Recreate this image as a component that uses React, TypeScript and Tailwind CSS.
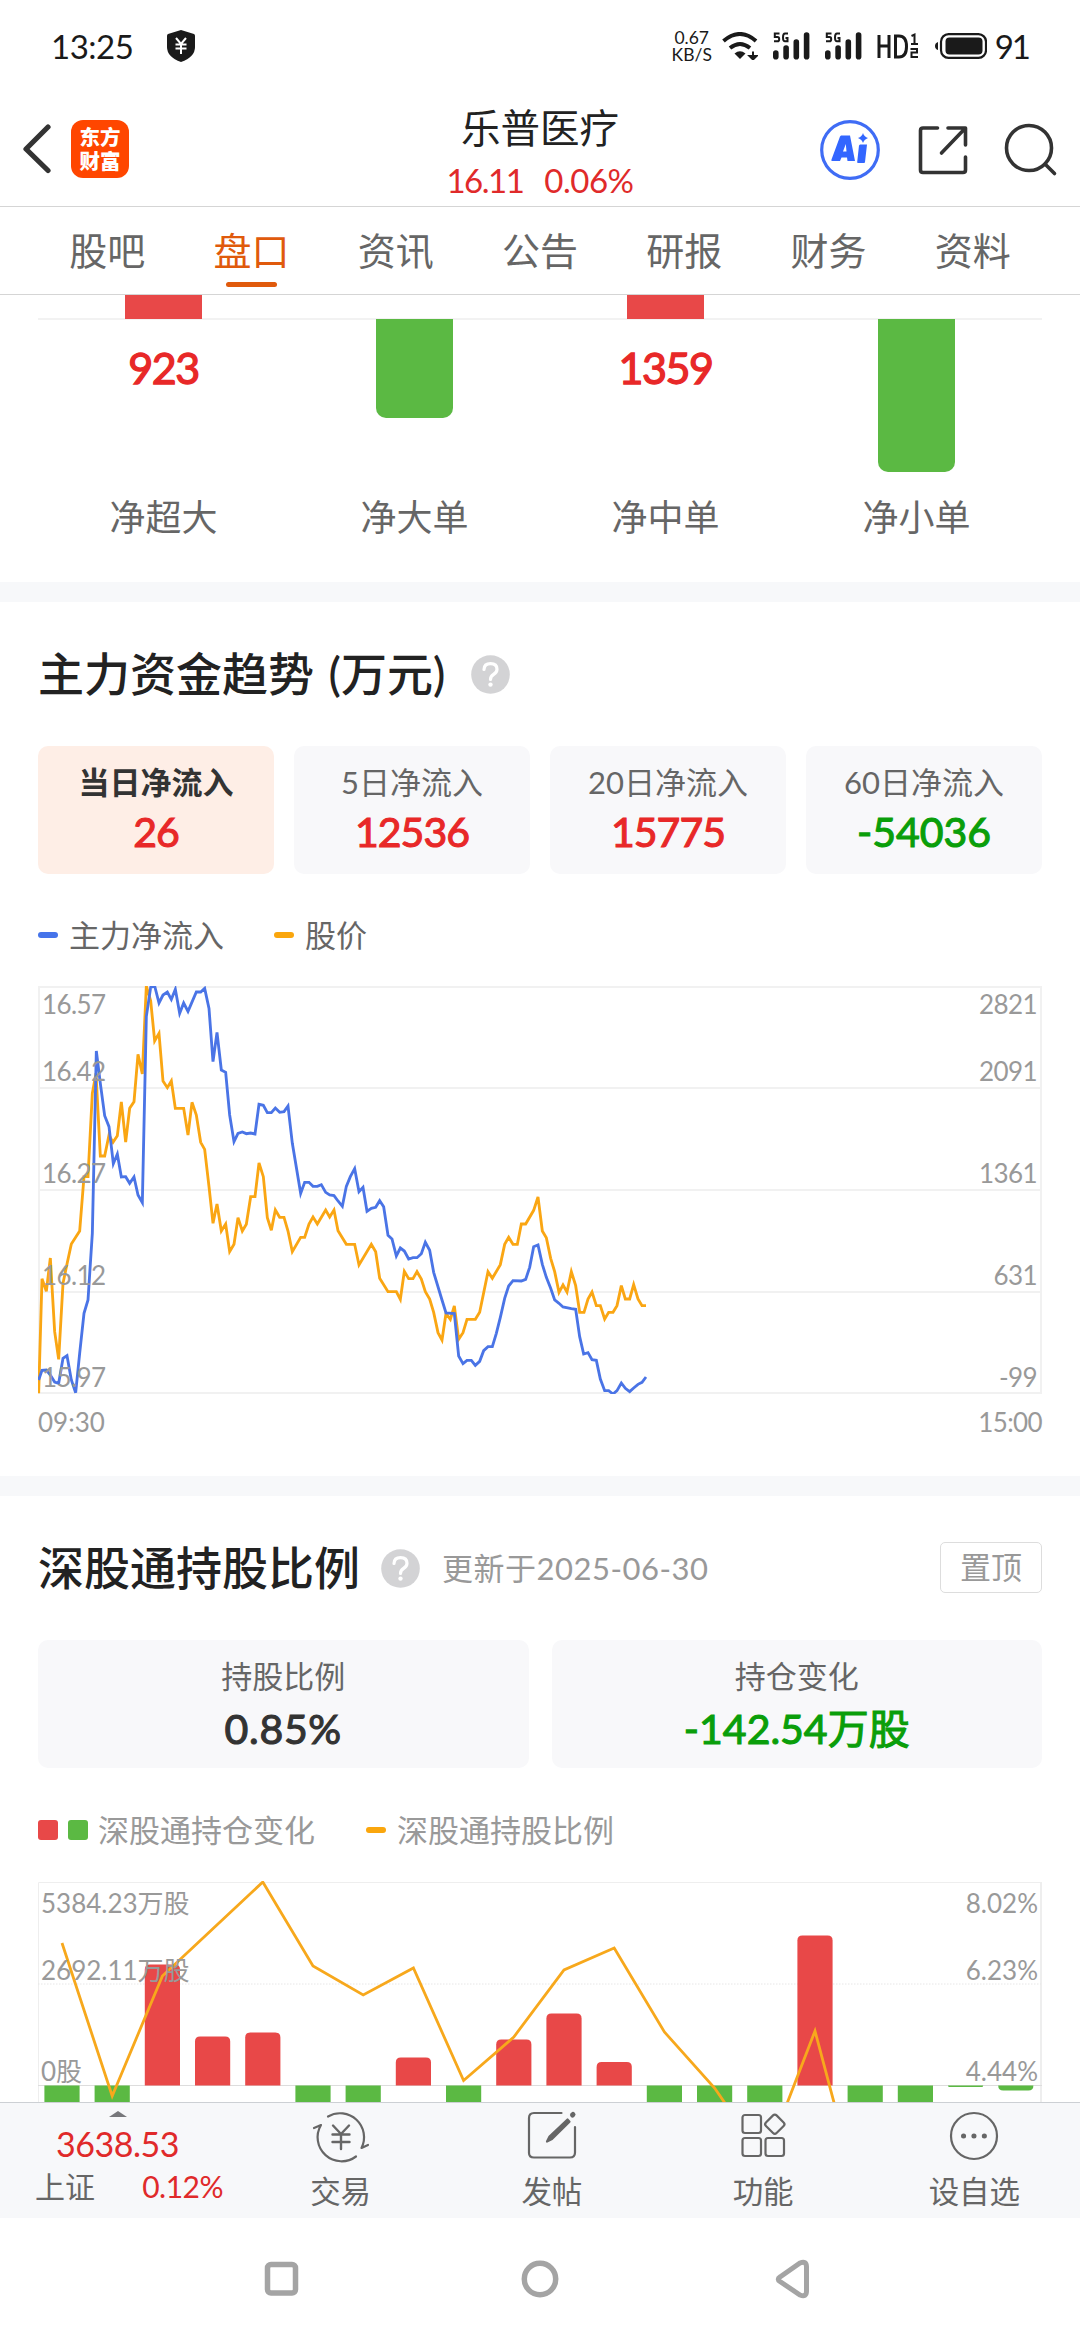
import type { ReactNode } from "react"
import clsx from "clsx"

const tabs = ["股吧", "盘口", "资讯", "公告", "研报", "财务", "资料"]

const netOrders = [
  { label: "净超大", value: "923" },
  { label: "净大单", height: 99 },
  { label: "净中单", value: "1359" },
  { label: "净小单", height: 153 },
]

const inflows = [
  { label: "当日净流入", value: "26", active: true },
  { label: "5日净流入", value: "12536" },
  { label: "20日净流入", value: "15775" },
  { label: "60日净流入", value: "-54036" },
]

const priceLine =
  "116,1270 126,926 139,964 151,864 164,1085 176,1168 189,940 201,882 214,822 227,802 239,783 252,620 264,620 277,370 288,310 301,558 314,558 327,495 339,517 352,497 364,396 377,516 389,415 402,395 414,253 427,312 439,48 452,92 464,213 477,190 489,333 502,353 514,333 526,415 551,415 564,495 576,397 589,435 602,517 614,538 627,650 639,760 651,702 664,783 677,762 689,845 702,823 714,743 727,783 739,763 752,680 765,680 777,579 790,620 802,743 814,781 826,720 839,742 852,742 864,783 877,845 902,802 914,802 927,762 939,741 952,762 977,720 989,741 1002,720 1014,782 1039,823 1064,823 1077,885 1114,823 1127,845 1139,925 1164,965 1189,965 1201,988 1213,904 1226,926 1239,926 1251,905 1264,927 1276,965 1289,987 1301,1027 1314,1088 1326,1110 1338,1030 1351,1048 1363,1008 1376,1108 1389,1088 1401,1048 1426,1048 1439,1027 1464,905 1477,925 1501,884 1514,823 1526,802 1539,823 1552,823 1564,762 1577,762 1601,721 1614,681 1627,783 1639,803 1652,865 1664,905 1677,967 1689,945 1701,966 1714,905 1727,947 1739,1027 1752,1027 1764,987 1776,966 1789,1007 1801,1007 1814,1047 1826,1027 1839,1027 1851,1007 1864,947 1876,987 1889,987 1901,944 1914,987 1926,1007 1938,1007"

const inflowLine =
  "116,1230 126,1201 139,1200 151,1215 164,1236 176,1240 189,1165 201,1157 214,1230 227,1268 239,1150 252,1030 264,990 277,790 289,243 301,340 314,437 327,470 340,581 352,552 364,621 377,620 389,640 402,621 414,675 427,698 439,140 452,52 464,48 477,99 489,75 502,66 514,88 526,58 539,130 551,99 564,124 589,66 602,66 614,55 627,115 639,275 651,187 664,300 677,307 689,435 702,515 714,490 727,486 739,491 752,489 765,492 777,403 790,406 802,428 814,428 826,414 839,427 852,425 864,408 877,520 902,670 914,637 927,637 939,649 952,649 964,644 977,667 989,675 1002,677 1014,693 1027,709 1039,649 1051,620 1064,596 1077,665 1089,652 1101,724 1114,715 1127,712 1139,692 1151,710 1164,796 1176,807 1189,858 1201,834 1213,843 1226,867 1239,863 1251,863 1264,851 1276,817 1289,841 1301,907 1326,990 1338,1029 1363,1031 1376,1158 1389,1181 1401,1171 1414,1171 1426,1186 1439,1174 1451,1142 1464,1130 1477,1130 1489,1090 1501,1042 1514,985 1526,948 1539,932 1564,933 1577,928 1589,892 1601,830 1614,825 1627,883 1639,922 1652,955 1664,990 1676,999 1689,1011 1714,1016 1727,1018 1739,1100 1751,1152 1764,1148 1776,1169 1789,1171 1801,1227 1814,1262 1826,1262 1839,1272 1851,1262 1864,1239 1876,1255 1889,1265 1901,1254 1914,1243 1926,1237 1938,1221"

const trendLabels = [
  { y: 18, left: "16.57", right: "2821" },
  { y: 85, left: "16.42", right: "2091" },
  { y: 187.5, left: "16.27", right: "1361" },
  { y: 289.5, left: "16.12", right: "631" },
  { y: 391.5, left: "15.97", right: "-99" },
]

// bar heights: positive grows up from the zero line, negative hangs below it
const holdingBars = [-60, -60, 121, 49, 53, -60, -60, 28, -60, 46, 72, 23.5, -60, -60, -60, 150, -60, -60, -1.5, -5]
const ratioLine = [62, 215, 95, 48, 1, 85, 114, 87, 199.5, 156, 89, 67, 151, 207, 280, 150, 339]

const holdingLabels = [
  { y: 22, left: "5384.23万股", right: "8.02%" },
  { y: 89, left: "2692.11万股", right: "6.23%" },
  { y: 190.5, left: "0股", right: "4.44%" },
]

function StatusBar() {
  return (
    <div className="flex h-[92px] shrink-0 items-center justify-between pl-[51px] pr-[51px] text-[#1a1a1a]">
      <div className="flex items-center gap-[34px]">
        <span className="text-[33px] leading-none tracking-[-0.500px]">13:25</span>
        <svg className="h-8 w-7" viewBox="0 0 28 32">
          <path d="M14 0 L27 4 Q28 4.500 28 6 V17 Q28 27 14 32 Q0 27 0 17 V6 Q0 4.500 1 4 Z" fill="#1a1a1a" />
          <path d="M9 8 L14 14 L19 8 M8.500 14.500 H19.500 M8.500 18.500 H19.500 M14 14 V24" stroke="#fff" strokeWidth="2" fill="none" />
        </svg>
      </div>
      <div className="flex items-center">
        <div className="flex w-[42px] flex-col items-center text-[17.500px] leading-[17px]">
          <span>0.67</span>
          <span>KB/S</span>
        </div>
        <svg className="ml-[9px] h-[28px] w-9" viewBox="0 0 36 28">
          <path d="M1.500 9 Q18 -5 34 9" stroke="#1a1a1a" strokeWidth="4" fill="none" />
          <path d="M8 16 Q18 8 28 16" stroke="#1a1a1a" strokeWidth="4" fill="none" />
          <path d="M12.500 21.500 Q18 17 23.500 21.500 L18 27 Z" fill="#1a1a1a" />
          <path d="M31 19.500 V26 M27.500 24 L31 27.500 L34.500 24 Z" stroke="#1a1a1a" strokeWidth="2" fill="#1a1a1a" />
        </svg>
        <Signal className="ml-[15px]" />
        <Signal className="ml-[15px]" />
        <svg className="ml-[15px] h-7 w-[42px]" viewBox="0 0 42 28">
          <path d="M2 3 V26 M12 3 V26 M2 14 H12 M18.500 4 V25 H22 Q29.500 25 29.500 14.500 Q29.500 4 22 4 Z" stroke="#1a1a1a" strokeWidth="3" fill="none" />
          <path d="M34.500 4 L37.500 2.500 V12.500 M34 12 H41 M33.500 17 H40 V20.500 H34.500 V25 H41" stroke="#1a1a1a" strokeWidth="2" fill="none" />
        </svg>
        <svg className="ml-[16px] h-[26px] w-[52px]" viewBox="0 0 52 26">
          <path d="M3 9 Q0 10 0 13 Q0 16 3 17 Z" fill="#1a1a1a" />
          <rect x="6" y="1.200" width="45" height="23.600" rx="7.500" stroke="#1a1a1a" strokeWidth="2.200" fill="none" />
          <rect x="10.500" y="4.500" width="37" height="17" rx="4" fill="#1a1a1a" />
        </svg>
        <span className="ml-2 text-[33px] leading-none tracking-[-2px]">91</span>
      </div>
    </div>
  )
}

function Signal({ className }: { className?: string }) {
  return (
    <svg className={clsx("h-[28px] w-[37px]", className)} viewBox="0 0 37 28">
      <path d="M6.500 1.500 H1.800 V5 H4.500 Q6.200 5 6.200 7.200 Q6.200 9.300 4.500 9.300 H1 M15 1.500 H12 Q10 1.500 10 5.500 Q10 9.300 12 9.300 H14.500 V6 H12.500" stroke="#1a1a1a" strokeWidth="2" fill="none" />
      <path d="M2.800 21 V24.700 M13.100 16 V24.700 M23.300 10 V24.700 M33.600 3 V24.700" stroke="#1a1a1a" strokeWidth="5.600" strokeLinecap="round" />
    </svg>
  )
}

function Header() {
  return (
    <header className="flex h-[115px] shrink-0 items-start border-b border-[#d5d5d5]">
      <div className="flex w-[360px] items-center pl-[22px] pt-7">
        <svg className="h-[50px] w-[30px]" viewBox="0 0 30 50">
          <path d="M26 4.500 L4 26.500 L26 48" transform="translate(0 -1.500)" stroke="#333" strokeWidth="5.200" strokeLinecap="round" strokeLinejoin="round" fill="none" />
        </svg>
        <div className="ml-[19px] flex h-[58px] w-[58px] flex-col items-center justify-center rounded-xl bg-[#ff4600] text-[20.500px] leading-[24.500px] font-black text-white">
          <span>东方</span>
          <span>财富</span>
        </div>
      </div>
      <div className="flex w-[360px] flex-col items-center pt-[11px]">
        <h1 className="text-[39.500px] leading-[50px] text-[#222]">乐普医疗</h1>
        <div className="mt-[11px] flex gap-[21px] text-[33px] leading-[32px] text-[#e02a2a]">
          <span className="tracking-[-1.500px]">16.11</span>
          <span className="tracking-[-0.500px]">0.06%</span>
        </div>
      </div>
      <div className="flex w-[360px] items-center justify-end pr-[22px] pt-7">
        <svg className="h-[60px] w-[60px]" viewBox="0 0 60 60">
          <circle cx="30" cy="30" r="28.300" stroke="#3f6cf5" strokeWidth="3.200" fill="none" />
          <path fillRule="evenodd" d="M21 15.500 H30 L35 41 H27.500 L27 37.500 H21.500 L20 41 H12 Q11 41 11.500 39.500 L20 16.500 Z M23 31.500 H26.500 L25.800 24 Z" fill="#3366ff" />
          <path d="M40 24.500 H47 L45 42 Q45 43 44 43 H38 Q37 43 37.200 42 L39 25.500 Z M43 13 Q44 16.500 48 18 Q44 19.500 43 23 Q42 19.500 38 18 Q42 16.500 43 13 Z" fill="#3366ff" />
        </svg>
        <svg className="ml-[37px] h-[52px] w-[52px]" viewBox="0 0 52 52">
          <path d="M20.500 4 H6 Q3.500 4 3.500 6.500 V46 Q3.500 48.500 6 48.500 H46 Q48.500 48.500 48.500 46 V33 M31 4 H48.500 V21 M47.500 5 L24.500 29" stroke="#333" strokeWidth="3.600" strokeLinecap="round" strokeLinejoin="round" fill="none" />
        </svg>
        <svg className="ml-[35px] h-[56px] w-[54px]" viewBox="0 0 54 56">
          <circle cx="25" cy="26" r="22.500" stroke="#333" strokeWidth="3.600" fill="none" />
          <path d="M41 42 L50.500 51.500" stroke="#333" strokeWidth="3.600" strokeLinecap="round" />
        </svg>
      </div>
    </header>
  )
}

function Tabs() {
  return (
    <nav className="flex h-[88px] shrink-0 border-b border-[#d5d5d5] px-[35px]">
      {tabs.map((tab) => (
        <div key={tab} className={clsx("flex flex-1 flex-col items-center pt-[17px] text-[38px] leading-[52px]", tab === "盘口" ? "text-[#e05a0c]" : "text-[#666]")}>
          {tab}
          {tab === "盘口" && <span className="mt-[6px] h-[5px] w-[51px] rounded-full bg-[#e05a0c]" />}
        </div>
      ))}
    </nav>
  )
}

function NetOrders() {
  return (
    <section className="grid h-[287px] shrink-0 grid-cols-4 px-[38px]">
      {netOrders.map((item) => (
        <div key={item.label} className="flex flex-col items-center">
          <div className="flex h-[25px] w-full justify-center border-b-2 border-[#f2f2f2]">
            {item.value && <div className="h-6 w-[77px] shrink-0 bg-[#e84848]" />}
          </div>
          <div className="flex h-[173px] flex-col items-center">
            {item.value ? (
              <span className="pt-[24px] text-[43px] leading-[48px] tracking-[-1.500px] text-[#e82828] [-webkit-text-stroke:1.3px_#e82828]">{item.value}</span>
            ) : (
              <div className="-mt-px w-[77px] rounded-b-[10px] bg-[#5bb943]" style={{ height: item.height }} />
            )}
          </div>
          <span className="text-[36px] leading-[48px] text-[#666]">{item.label}</span>
        </div>
      ))}
    </section>
  )
}

function Help() {
  return (
    <svg className="h-[39px] w-[39px] shrink-0" viewBox="0 0 39 39">
      <circle cx="19.500" cy="19.500" r="19.300" fill="#d3d3d5" />
      <path d="M13 14.500 Q13.200 8.700 19.500 8.700 Q26 8.700 26 14.300 Q26 17.500 22.500 19.500 Q19.500 21.300 19.500 24.500" stroke="#fff" strokeWidth="3.200" strokeLinecap="round" fill="none" />
      <circle cx="19.500" cy="29.600" r="2.200" fill="#fff" />
    </svg>
  )
}

function Stat({ label, value, active, className }: { label: string; value: string; active?: boolean; className: string }) {
  return (
    <div className={clsx("flex h-32 flex-1 flex-col items-center rounded-[10px] pt-[14px]", active ? "bg-[#feeee6]" : "bg-[#f8f8fa]")}>
      <span className={clsx("text-[31px] leading-[44px]", active ? "font-bold text-[#333]" : "text-[#666]")}>{label}</span>
      <span className={clsx("text-[41px] leading-[48px] [-webkit-text-stroke:1.1px_currentColor]", className)}>{value}</span>
    </div>
  )
}

function Dash({ className }: { className: string }) {
  return <span className={clsx("mr-[11px] h-[6px] w-5 rounded-[3px]", className)} />
}

function TrendSection() {
  return (
    <section className="h-[874px] shrink-0 px-[38px]">
      <div className="flex h-36 items-center">
        <h2 className="text-[46px] leading-none font-medium text-[#222] [word-spacing:3px]">主力资金趋势 (万元)</h2>
        <span className="ml-[26px]"><Help /></span>
      </div>
      <div className="flex gap-5">
        {inflows.map((item) => (
          <Stat
            key={item.label}
            {...item}
            className={item.value.startsWith("-") ? "mt-[4px] text-[#0a9e0a]" : "mt-[4px] tracking-[-1px] text-[#e82828]"}
          />
        ))}
      </div>
      <div className="mt-[36px] flex h-[50px] items-center text-[31px] text-[#666]">
        <Dash className="bg-[#4674ea]" />
        主力净流入
        <span className="w-[50px]" />
        <Dash className="bg-[#faa60d]" />
        股价
      </div>
      <div className="relative mt-[26px] h-[408px]">
        <svg className="absolute inset-0 h-[408px] w-[1004px]" viewBox="114 48 3012 1224">
          <path d="M117 51 H3123 V1269 H117 Z M117 354 H3123 M117 660 H3123 M117 966 H3123" stroke="#f1f1f1" strokeWidth="6" fill="none" />
          <polyline points={priceLine} stroke="#faa613" strokeWidth="8.500" fill="none" />
          <polyline points={inflowLine} stroke="#4a74e6" strokeWidth="8.500" fill="none" />
        </svg>
        <svg className="absolute inset-0 h-[408px] w-[1004px]" viewBox="0 0 1004 408" fontSize="26" letterSpacing="-0.6" fill="#999">
          {trendLabels.map((row) => (
            <g key={row.y}>
              <text x="4" y={row.y + 9.5}>{row.left}</text>
              <text x="999" y={row.y + 9.5} textAnchor="end">{row.right}</text>
            </g>
          ))}
        </svg>
      </div>
      <div className="mt-[10px] flex justify-between text-[26px] leading-[36px] text-[#999]">
        <span>09:30</span>
        <span className="tracking-[-0.600px]">15:00</span>
      </div>
    </section>
  )
}

function HoldingSection() {
  return (
    <section className="h-[606px] shrink-0 overflow-hidden px-[38px]">
      <div className="flex h-36 items-center">
        <h2 className="text-[46px] leading-none font-medium text-[#222]">深股通持股比例</h2>
        <span className="ml-[21px]"><Help /></span>
        <span className="ml-[22px] text-[31px] tracking-[0.500px] text-[#999]">更新于2025-06-30</span>
        <button className="mb-[2px] ml-auto h-[51px] w-[102px] rounded-[5px] border border-[#ddd] text-[31px] leading-[47px] text-[#999]">置顶</button>
      </div>
      <div className="flex gap-[23px]">
        <Stat label="持股比例" value="0.85%" className="mt-[7px] tracking-[0.700px] text-[#333]" />
        <Stat label="持仓变化" value="-142.54万股" className="mt-[7px] text-[#0a9e0a]" />
      </div>
      <div className="mt-[37px] flex h-[50px] items-center text-[31px] text-[#999]">
        <span className="h-5 w-5 rounded-[3px] bg-[#e84848]" />
        <span className="mx-[10px] h-5 w-5 rounded-[3px] bg-[#5bb943]" />
        深股通持仓变化
        <span className="w-[51px]" />
        <Dash className="bg-[#faa60d]" />
        深股通持股比例
      </div>
      <svg className="mt-[26px] h-[221px] w-[1004px]" viewBox="0 0 1004 221">
        <path d="M0.500 300 V1.500 H1003" stroke="#eee" fill="none" />
        <path d="M1003 1 V300" stroke="#eee" strokeWidth="2" />
        <path d="M0 103 H1003" stroke="#e6e6e6" strokeDasharray="1.500 1.500" />
        <path d="M0 204.500 H1004" stroke="#ddd" />
        {holdingBars.map((h, i) => {
          const x = 6.4 + i * 50.2
          const r = Math.min(5, Math.abs(h))
          return h > 0 ? (
            <path key={i} d={`M${x} 204.5 v${-(h - r)} q0 ${-r} ${r} ${-r} h${35.2 - 2 * r} q${r} 0 ${r} ${r} v${h - r} z`} fill="#e84848" />
          ) : (
            <path key={i} d={`M${x} 204.5 v${-h - r} q0 ${r} ${r} ${r} h${35.2 - 2 * r} q${r} 0 ${r} ${-r} v${h + r} z`} fill="#5bb943" />
          )
        })}
        <polyline points={ratioLine.map((y, i) => `${24 + i * 50.2},${y}`).join(" ")} stroke="#f7a81c" strokeWidth="2.800" fill="none" />
        <g fontSize="26" fill="#999">
          {holdingLabels.map((row) => (
            <g key={row.y}>
              <text x="3" y={row.y + 9.5}>{row.left}</text>
              <text x="1000" y={row.y + 9.5} textAnchor="end">{row.right}</text>
            </g>
          ))}
        </g>
      </svg>
    </section>
  )
}

function Action({ label, children }: { label: string; children: ReactNode }) {
  return (
    <div className="flex flex-1 flex-col items-center pt-[5px]">
      <svg className="h-[56px] w-[60px]" viewBox="0 0 60 56" stroke="#666" strokeWidth="2.200" strokeLinecap="round" strokeLinejoin="round" fill="none">
        {children}
      </svg>
      <span className="mt-[5px] text-[30.500px] leading-[44px] text-[#666]">{label}</span>
    </div>
  )
}

function BottomBar() {
  return (
    <footer className="flex h-[116px] shrink-0 border-t border-[#ccd0d4] bg-[#f7f8fa]">
      <div className="flex w-[235px] flex-col items-center pt-2">
        <svg className="h-[6px] w-[18px]" viewBox="0 0 18 6"><path d="M0 6 L9 0 L18 6 Z" fill="#77777b" /></svg>
        <span className="mt-[9px] text-[34px] leading-[36px] tracking-[-0.500px] text-[#e02a2a]">3638.53</span>
        <div className="mt-[4px] flex w-full justify-between pl-[35px] pr-[12px] text-[30px] leading-[40px]">
          <span className="text-[#666]">上证</span>
          <span className="tracking-[-0.500px] text-[#e02a2a]">0.12%</span>
        </div>
      </div>
      <Action label="交易">
        <path d="M17 8.500 A24 24 0 0 1 50.500 40 L57 37 M45 48.500 A24 24 0 0 1 10 17 L3 20" />
        <path d="M22 17.500 L30 26 L38 17.500 M21.500 26.500 H38.500 M21.500 34 H38.500 M30 26.500 V41" strokeWidth="2.400" />
      </Action>
      <Action label="发帖">
        <path d="M39.500 5 H12 Q7 5 7 10 V45 Q7 49.500 12 49.500 H48 Q53 49.500 53 44.500 V19" />
        <path d="M45.500 11.500 L47.500 13.800 L30 31 L25 33.500 L27.500 28.500 Z" fill="#666" />
        <path d="M51 6.500 L50.500 7" strokeWidth="5" />
      </Action>
      <Action label="功能">
        <rect x="9.500" y="7" width="18.500" height="18" rx="2.500" />
        <rect x="9.500" y="30" width="18.500" height="18" rx="2.500" />
        <rect x="32.500" y="30" width="18.500" height="18" rx="2.500" />
        <rect x="34.300" y="8.700" width="15" height="15" rx="2.500" transform="rotate(45 41.800 16.200)" />
      </Action>
      <Action label="设自选">
        <circle cx="30" cy="28" r="23" />
        <path d="M19.500 28 h0.100 M29.900 28 h0.100 M40.300 28 h0.100" strokeWidth="5" />
      </Action>
    </footer>
  )
}

function SystemNav() {
  return (
    <div className="flex h-[122px] items-center pl-[262px]">
      <svg className="h-10 w-10" viewBox="0 0 40 40"><rect x="5.500" y="5.500" width="28" height="28.500" rx="3.500" stroke="#a4a4a4" strokeWidth="5.500" fill="none" /></svg>
      <svg className="ml-[218px] h-10 w-10" viewBox="0 0 40 40"><circle cx="20" cy="20" r="15.700" stroke="#a4a4a4" strokeWidth="5.500" fill="none" /></svg>
      <svg className="ml-[212px] h-10 w-10" viewBox="0 0 40 40"><path d="M8 18 L28 4 Q34.500 1.500 34.500 8 V32 Q34.500 38.500 28 36 L8 22.500 Q4.500 20 8 18 Z" stroke="#a4a4a4" strokeWidth="5" fill="none" /></svg>
    </div>
  )
}

export default function App() {
  return (
    <div className="flex h-[2340px] w-[1080px] flex-col overflow-hidden bg-white font-['Lato','Noto_Sans_CJK_SC',sans-serif]">
      <StatusBar />
      <Header />
      <Tabs />
      <NetOrders />
      <div className="h-5 shrink-0 bg-[#f7f8fa]" />
      <TrendSection />
      <div className="h-5 shrink-0 bg-[#f7f8fa]" />
      <HoldingSection />
      <BottomBar />
      <SystemNav />
    </div>
  )
}
